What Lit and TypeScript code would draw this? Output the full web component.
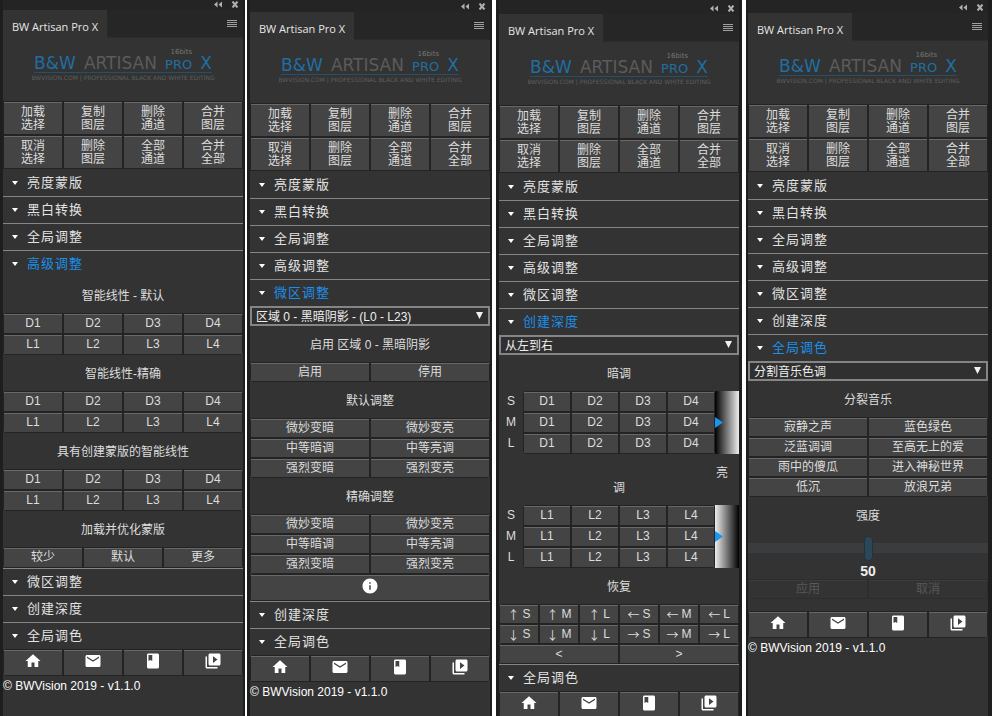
import { LitElement, html, svg, css, nothing } from "lit";
import type { TemplateResult } from "lit";
import { customElement, property } from "lit/decorators.js";
import { classMap } from "lit/directives/class-map.js";

const SECTIONS = ["亮度蒙版", "黑白转换", "全局调整", "高级调整", "微区调整", "创建深度", "全局调色"];

const TOP_ACTIONS: [string, string][] = [
  ["加载", "选择"], ["复制", "图层"], ["删除", "通道"], ["合并", "图层"],
  ["取消", "选择"], ["删除", "图层"], ["全部", "通道"], ["合并", "全部"],
];

const DARKS = ["D1", "D2", "D3", "D4"];
const LIGHTS = ["L1", "L2", "L3", "L4"];
const TONES = ["微妙变暗", "微妙变亮", "中等暗调", "中等亮调", "强烈变暗", "强烈变亮"];

const RESTORE: [string, string][] = [
  ["↑", "S"], ["↑", "M"], ["↑", "L"], ["←", "S"], ["←", "M"], ["←", "L"],
  ["↓", "S"], ["↓", "M"], ["↓", "L"], ["→", "S"], ["→", "M"], ["→", "L"],
];

const icon = (body: TemplateResult) =>
  html`<svg class="icon" viewBox="0 0 24 24" aria-hidden="true">${body}</svg>`;

const ICONS = {
  home: svg`<path d="M10 20v-6h4v6h5v-8h3L12 3 2 12h3v8z"/>`,
  mail: svg`<path d="M20 4H4c-1.1 0-2 .9-2 2v12c0 1.1.9 2 2 2h16c1.1 0 2-.9 2-2V6c0-1.1-.9-2-2-2zm0 4l-8 5-8-5V6l8 5 8-5v2z"/>`,
  book: svg`<path d="M18 2H6c-1.1 0-2 .9-2 2v16c0 1.1.9 2 2 2h12c1.1 0 2-.9 2-2V4c0-1.1-.9-2-2-2zM6 4h5v8l-2.5-1.5L6 12V4z"/>`,
  videos: svg`<path d="M4 6H2v14c0 1.1.9 2 2 2h14v-2H4V6zm16-4H8c-1.1 0-2 .9-2 2v12c0 1.1.9 2 2 2h12c1.1 0 2-.9 2-2V4c0-1.1-.9-2-2-2zm-8 12.500v-9l6 4.500-6 4.500z"/>`,
  info: svg`<path d="M12 2C6.480 2 2 6.480 2 12s4.480 10 10 10 10-4.480 10-10S17.520 2 12 2zm1 15h-2v-6h2v6zm0-8h-2V7h2v2z"/>`,
};

@customElement("artisan-panel")
export class ArtisanPanel extends LitElement {
  /** Index of the expanded section. */
  @property({ type: Number }) open = 0;
  @property({ type: Boolean }) credit = false;

  static styles = css`
    :host {
      display: block;
      min-width: 0;
      background: #333;
      color: #ddd;
      font: 12px/15px "Liberation Sans", "Noto Sans CJK SC", sans-serif;
    }
    * { box-sizing: border-box; }
    button, select, input { font: inherit; color: inherit; margin: 0; }
    .tabs {
      display: flex;
      height: 28px;
      justify-content: space-between;
      background: #262626;
      border-bottom: 1px solid #2c2c2c;
    }
    .tab {
      height: 28px;
      padding: 5px 9px 0;
      border: 0;
      background: #333;
      color: #e6e6e6;
      font: 11px/23px "Open Sans", "Noto Sans", sans-serif;
      white-space: nowrap;
    }
    .menu {
      display: flex;
      padding: 0 6px 0 0;
      border: 0;
      background: none;
      align-items: center;
    }
    .menu svg { width: 10px; height: 9px; display: block; }
    .brand {
      display: flex;
      flex-direction: column;
      align-items: center;
      height: 63px;
      padding-top: 10px;
      font-family: "DejaVu Sans", sans-serif;
      color: #5b5b5b;
    }
    .logo { display: flex; flex-direction: column; align-items: center; width: 178px; }
    .words {
      display: flex;
      justify-content: space-between;
      align-items: flex-end;
      width: 100%;
      height: 25px;
      border-bottom: 1px solid #25506b;
      line-height: 18px;
      white-space: nowrap;
    }
    .blue { color: #1f6fa3; }
    .big { font-size: 17px; }
    .pro { display: flex; flex-direction: column; align-items: flex-end; }
    .bits { font-size: 7px; line-height: 9px; color: #777; }
    .pro-word { font-size: 13px; line-height: 15px; }
    .tagline { font-size: 6px; line-height: 10px; white-space: nowrap; color: #5e5e5e; }
    .group {
      display: grid;
      gap: 2px;
      padding: 1px;
      background: #232323;
    }
    .rounded { border-radius: 4px; overflow: hidden; }
    .c1 { grid-template-columns: 1fr; }
    .c2 { grid-template-columns: repeat(2, 1fr); }
    .c3 { grid-template-columns: repeat(3, 1fr); }
    .c4 { grid-template-columns: repeat(4, 1fr); }
    .c6 { grid-template-columns: repeat(6, 1fr); }
    .btn {
      display: flex;
      justify-content: center;
      align-items: center;
      min-width: 0;
      padding: 0 0 1px;
      border: 0;
      border-top: 1px solid #686868;
      background: #444;
      line-height: 13px;
      white-space: nowrap;
    }
    .tall { height: 32px; padding: 0; }
    .mid { height: 19px; }
    .low { height: 18px; }
    .foot { height: 25px; padding-bottom: 5px; color: #fff; }
    .sign { font-family: "Noto Sans CJK SC", sans-serif; padding-right: 3px; }
    .icon { width: 18px; height: 18px; fill: currentColor; display: block; }
    .head {
      display: flex;
      align-items: center;
      gap: 9px;
      width: 100%;
      height: 27px;
      padding: 0 9px 1px;
      border: 0;
      border-top: 1px solid #858585;
      background: none;
      color: #e2e2e2;
      font-size: 13px;
      letter-spacing: 1px;
      text-align: left;
    }
    .first { border-top-color: transparent; }
    .current { color: #1b8fea; }
    .caret { width: 6px; height: 4px; fill: #fff; }
    .label {
      display: flex;
      flex-direction: column;
      align-items: center;
      margin: 0;
      padding: 12px 0 9px;
      font-weight: normal;
      font-size: 12px;
    }
    .aside { align-self: flex-end; padding-right: 11px; }
    .picker { position: relative; display: block; }
    .select {
      appearance: none;
      display: block;
      width: 100%;
      height: 20px;
      padding: 2px 20px 0 4px;
      border: 2px solid #858585;
      border-radius: 0;
      background: #303030;
      color: #eee;
      line-height: 14px;
    }
    .arrow { position: absolute; right: 7px; top: 6px; width: 7px; height: 7px; fill: #f0f0f0; pointer-events: none; }
    .depth { display: grid; grid-template-columns: 24px 1fr 24px; }
    .sizes { display: flex; flex-direction: column; text-align: center; line-height: 20px; }
    .sizes span { height: 21px; }
    .ramp { display: flex; align-items: center; }
    .ramp svg { width: 8px; height: 11px; fill: #1a96f0; }
    .to-light { background: linear-gradient(to right, #000, #eee); }
    .to-dark { background: linear-gradient(to right, #eee, #000); }
    .range { display: block; appearance: none; width: 100%; height: 30px; background: none; }
    .range::-webkit-slider-runnable-track { height: 10px; background: #3b3c3e; }
    .range::-webkit-slider-thumb {
      appearance: none;
      width: 9px;
      height: 25px;
      margin-top: -7px;
      border-radius: 4px;
      border: 1px solid #263239;
      background: #2a475b;
    }
    .value { display: block; text-align: center; font-weight: bold; font-size: 14px; line-height: 16px; color: #eee; }
    .faded { background: #2d2d2d; margin-bottom: 12px; }
    .faded .btn { background: #333; border-top-color: #3c3c3c; color: #585858; }
    .credit { margin: 0; line-height: 20px; color: #fff; }
  `;

  private group(cols: number, items: unknown[], size = "mid") {
    return html`<div class="group rounded c${cols}">
      ${items.map((item) => html`<button class="btn ${size}">${item}</button>`)}
    </div>`;
  }

  private label(text: string) {
    return html`<h3 class="label">${text}</h3>`;
  }

  private picker(name: string, value: string) {
    return html`<label class="picker">
      <select class="select" aria-label=${name}><option>${value}</option></select>
      <svg class="arrow" viewBox="0 0 7 7" aria-hidden="true"><path d="M0 0h7L3.500 7z"/></svg>
    </label>`;
  }

  private depth(items: string[], ramp: string) {
    return html`<div class="depth">
      <div class="sizes"><span>S</span><span>M</span><span>L</span></div>
      ${this.group(4, [...items, ...items, ...items])}
      <div class="ramp ${ramp}">
        <svg viewBox="0 0 8 11" aria-hidden="true"><path d="M0 0l8 5.500L0 11z"/></svg>
      </div>
    </div>`;
  }

  private body() {
    switch (this.open) {
      case 3:
        return html`
          ${["智能线性 - 默认", "智能线性-精确", "具有创建蒙版的智能线性"].map(
            (t) => html`${this.label(t)}${this.group(4, [...DARKS, ...LIGHTS])}`
          )}
          ${this.label("加载并优化蒙版")}${this.group(3, ["较少", "默认", "更多"])}`;
      case 4:
        return html`
          ${this.picker("区域", "区域 0 - 黑暗阴影 - (L0 - L23)")}
          ${this.label("启用 区域 0 - 黑暗阴影")}${this.group(2, ["启用", "停用"], "low")}
          ${this.label("默认调整")}${this.group(2, TONES, "low")}
          ${this.label("精确调整")}${this.group(2, TONES, "low")}
          ${this.group(1, [icon(ICONS.info)], "foot")}`;
      case 5:
        return html`
          ${this.picker("方向", "从左到右")}
          ${this.label("暗调")}${this.depth(DARKS, "to-light")}
          <h3 class="label"><span class="aside">亮</span><span>调</span></h3>
          ${this.depth(LIGHTS, "to-dark")}
          ${this.label("恢复")}
          ${this.group(6, RESTORE.map(([sign, size]) => html`<span class="sign">${sign}</span>${size}`), "low")}
          ${this.group(2, ["<", ">"], "low")}`;
      case 6:
        return html`
          ${this.picker("色调", "分割音乐色调")}
          ${this.label("分裂音乐")}
          ${this.group(2, ["寂静之声", "蓝色绿色", "泛蓝调调", "至高无上的爱", "雨中的傻瓜", "进入神秘世界", "低沉", "放浪兄弟"], "low")}
          <label class="label" for="strength">强度</label>
          <input class="range" id="strength" type="range" min="0" max="100" value="50" />
          <output class="value" for="strength">50</output>
          <div class="group c2 faded">
            <button class="btn low" disabled>应用</button>
            <button class="btn low" disabled>取消</button>
          </div>`;
      default:
        return nothing;
    }
  }

  render() {
    return html`
      <div class="tabs">
        <button class="tab">BW Artisan Pro X</button>
        <button class="menu" aria-label="菜单">
          <svg viewBox="0 0 10 9"><path d="M0 1.500h10M0 3.500h10M0 5.500h10M0 7.500h10" stroke="#a0a0a0"/></svg>
        </button>
      </div>
      <div class="brand">
        <div class="logo">
          <div class="words">
            <span class="big blue">B&amp;W</span>
            <span class="big">ARTISAN</span>
            <span class="pro"><span class="bits">16bits</span><span class="pro-word blue">PRO</span></span>
            <span class="big blue">X</span>
          </div>
          <span class="tagline">BWVISION.COM | PROFESSIONAL BLACK AND WHITE EDITING</span>
        </div>
      </div>
      <div class="group c4">
        ${TOP_ACTIONS.map(([a, b]) => html`<button class="btn tall">${a}<br />${b}</button>`)}
      </div>
      ${SECTIONS.map(
        (name, i) => html`
          <button
            class=${classMap({ head: true, first: i === 0, current: i === this.open })}
            aria-expanded=${i === this.open ? "true" : "false"}
          >
            <svg class="caret" viewBox="0 0 6 4" aria-hidden="true"><path d="M0 0h6L3 4z"/></svg>${name}
          </button>
          ${i === this.open ? this.body() : nothing}
        `
      )}
      ${this.group(4, [icon(ICONS.home), icon(ICONS.mail), icon(ICONS.book), icon(ICONS.videos)], "foot")}
      ${this.credit ? html`<p class="credit">© BWVision 2019 - v1.1.0</p>` : nothing}
    `;
  }
}

@customElement("app-root")
export class AppRoot extends LitElement {
  static styles = css`
    :host { display: block; }
    * { box-sizing: border-box; }
    .board {
      display: grid;
      grid-template-columns: 245fr 2px 245fr 4px 246fr 4px 246fr;
      height: 100vh;
      overflow: hidden;
      background: #fff;
    }
    .window {
      grid-row: 1;
      display: flex;
      flex-direction: column;
      min-width: 0;
      background: #1e1e1e;
    }
    .w1 { grid-column: 1; padding: 0 2px 0 3px; }
    .w2 { grid-column: 3; padding: 0 2px 0 3px; }
    .w3 { grid-column: 5; padding: 0 3px; }
    .w4 { grid-column: 7; padding: 0 4px 0 2px; }
    .bar {
      display: flex;
      flex: none;
      justify-content: flex-end;
      align-items: flex-end;
      gap: 9px;
      padding: 0 4px 2px 0;
      background: #242424;
    }
    .w1 .bar { height: 10px; }
    .w2 .bar { height: 12px; }
    .w3 .bar { height: 14px; }
    .w4 .bar { height: 13px; }
    .bar button { display: block; padding: 0; border: 0; background: none; }
    .bar svg { display: block; width: 8px; height: 7px; }
    artisan-panel { flex: 1; }
  `;

  render() {
    return html`<main class="board">
      ${[3, 4, 5, 6].map(
        (open, i) => html`<section class="window w${i + 1}">
          <div class="bar">
            <button aria-label="折叠">
              <svg viewBox="0 0 8 7"><path d="M3.500 0.500v6L0 3.500zM8 0.500v6L4.500 3.500z" fill="#b0b0b0"/></svg>
            </button>
            <button aria-label="关闭">
              <svg viewBox="0 0 8 7"><path d="M1.500 0.500l5 6M6.500 0.500l-5 6" stroke="#b0b0b0" stroke-width="2"/></svg>
            </button>
          </div>
          <artisan-panel .open=${open} .credit=${open !== 5}></artisan-panel>
        </section>`
      )}
    </main>`;
  }
}
